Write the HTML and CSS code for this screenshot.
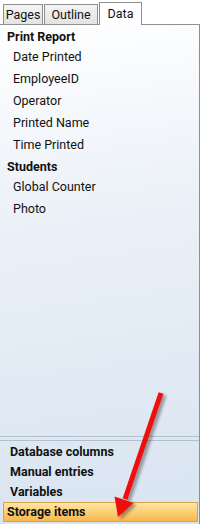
FILE: index.html
```html
<!DOCTYPE html>
<html>
<head>
<meta charset="utf-8">
<link rel="stylesheet" href="styles.css">
</head>
<body>
<div class="pane">
  <div class="tabs">
    <div class="tab tab-pages">Pages</div>
    <div class="tab tab-outline">Outline</div>
    <div class="tab tab-data active">Data</div>
  </div>
  <div class="panel">
    <div class="tree">
      <div class="group">Print Report</div>
      <div class="item">Date Printed</div>
      <div class="item">EmployeeID</div>
      <div class="item">Operator</div>
      <div class="item">Printed Name</div>
      <div class="item">Time Printed</div>
      <div class="group">Students</div>
      <div class="item">Global Counter</div>
      <div class="item">Photo</div>
    </div>
    <div class="splitter"></div>
    <div class="nav">
      <div class="navitem">Database columns</div>
      <div class="navitem">Manual entries</div>
      <div class="navitem">Variables</div>
      <div class="navitem selected">Storage items</div>
    </div>
  </div>
  <svg class="arrow" width="202" height="524" viewBox="0 0 202 524">
    <defs>
      <filter id="sh" x="-50%" y="-50%" width="200%" height="200%">
        <feGaussianBlur stdDeviation="1.5"/>
      </filter>
    </defs>
    <g fill="#303030" stroke="#303030" opacity="0.45" filter="url(#sh)" transform="translate(3,2)">
      <line x1="161" y1="393" x2="125" y2="499" stroke-width="5"/>
      <polygon points="118,517 115,497 133,503" stroke-width="1"/>
    </g>
    <line x1="161" y1="393" x2="125" y2="499" stroke="#f20d0d" stroke-width="5"/>
    <polygon points="118,517 114.5,496.5 133.5,503" fill="#f20d0d"/>
  </svg>
</div>
</body>
</html>
```
FILE: styles.css
```css
html, body {
  margin: 0;
  padding: 0;
}
body {
  width: 202px;
  height: 524px;
  overflow: hidden;
  background: #ffffff;
  font-family: Roboto, "Noto Sans", sans-serif;
  font-size: 12.5px;
  color: #111111;
}
.pane {
  position: relative;
  width: 202px;
  height: 524px;
  display: flex;
  flex-direction: column;
}
.tabs {
  display: flex;
  align-items: flex-end;
  height: 24px;
  padding-left: 3px;
  box-sizing: border-box;
}
.tab {
  height: 20px;
  box-sizing: border-box;
  margin-right: 1px;
  border: 1px solid #8e8f8f;
  border-bottom: none;
  background: linear-gradient(#f4f4f4, #e3e3e3);
  line-height: 20px;
  text-align: center;
  color: #111111;
}
.tab-pages { width: 40px; }
.tab-outline { width: 54px; }
.tab-data { width: 43px; }
.tab.active {
  height: 23px;
  margin-bottom: -1px;
  background: #ffffff;
  line-height: 22px;
  position: relative;
  z-index: 1;
}
.panel {
  flex: 1;
  width: 200px;
  box-sizing: border-box;
  border-top: 1px solid #8e8f8f;
  border-right: 1px solid #8e8f8f;
  background: linear-gradient(172deg, #ffffff 0%, #eaf0f7 40%, #d8e4f1 100%);
  display: flex;
  flex-direction: column;
}
.tree {
  flex: 1;
  padding-top: 2px;
}
.group {
  font-weight: bold;
  height: 20px;
  line-height: 20px;
  padding-left: 7px;
}
.item {
  height: 22px;
  line-height: 20px;
  padding-bottom: 2px;
  box-sizing: border-box;
  padding-left: 13px;
}
.splitter {
  height: 3px;
  border-top: 1px solid #b3bfce;
  border-bottom: 1px solid #b3bfce;
  margin-bottom: 1px;
}
.nav {
  padding-bottom: 2px;
}
.navitem {
  font-weight: bold;
  height: 20px;
  line-height: 20px;
  padding-left: 7px;
  margin-left: 3px;
  margin-right: 1px;
  box-sizing: border-box;
}
.navitem.selected {
  background: linear-gradient(#fde6a6, #fbcf76 50%, #f7b84d);
  border: 1px solid #d6a34a;
  padding-left: 3px;
  line-height: 18px;
}
.arrow {
  position: absolute;
  left: 0;
  top: 0;
  pointer-events: none;
}
```
